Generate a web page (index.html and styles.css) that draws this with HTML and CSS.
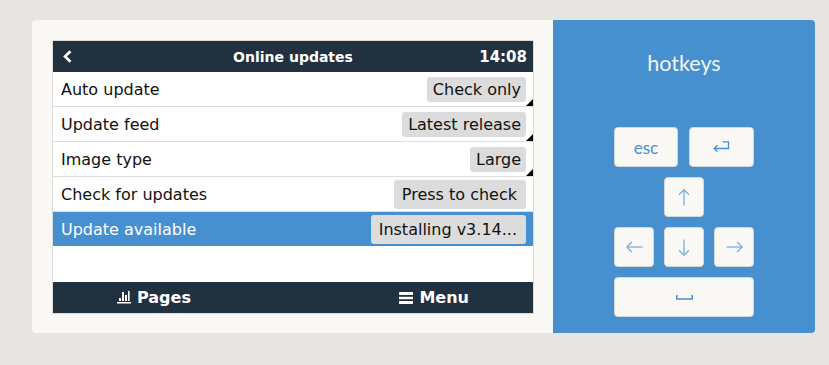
FILE: index.html
```html
<!DOCTYPE html>
<html lang="en">
<head>
  <meta charset="UTF-8">
  <title>Online updates</title>
  <link rel="stylesheet" href="styles.css">
</head>
<body>
  <div class="device">
    <div class="bezel">
      <div class="screen">
        <div class="titlebar">
          <span class="back">
            <svg width="10" height="13" viewBox="0 0 10 13"><polyline points="7.5,1.2 2,6.5 7.5,11.8" fill="none" stroke="#fff" stroke-width="2.6"/></svg>
          </span>
          <span class="title">Online updates</span>
          <span class="clock">14:08</span>
        </div>
        <ul class="items">
          <li class="item has-options"><span class="label">Auto update</span><span class="value">Check only</span></li>
          <li class="item has-options"><span class="label">Update feed</span><span class="value">Latest release</span></li>
          <li class="item has-options"><span class="label">Image type</span><span class="value">Large</span></li>
          <li class="item"><span class="label">Check for updates</span><span class="value button">Press to check</span></li>
          <li class="item selected"><span class="label">Update available</span><span class="value button">Installing v3.14...</span></li>
        </ul>
        <div class="toolbar">
          <span class="tool">
            <svg width="14" height="13" viewBox="0 0 14 13" fill="#fff">
              <rect x="2" y="7" width="2" height="3"/>
              <rect x="5" y="1" width="2" height="9"/>
              <rect x="8" y="4" width="2" height="6"/>
              <rect x="11" y="0" width="1.6" height="10"/>
              <rect x="0" y="11" width="14" height="1.5"/>
            </svg>
            Pages
          </span>
          <span class="tool">
            <svg width="14" height="12" viewBox="0 0 14 12" fill="#fff">
              <rect x="0" y="0" width="14" height="3"/>
              <rect x="0" y="4.8" width="14" height="2.4"/>
              <rect x="0" y="9" width="14" height="3"/>
            </svg>
            Menu
          </span>
        </div>
      </div>
    </div>

    <div class="hotkeys">
      <div class="hotkeys-title">hotkeys</div>
      <div class="keys">
        <div class="key-row">
          <div class="key wide">esc</div>
          <div class="key wide">
            <svg width="17" height="12" viewBox="0 0 17 12" fill="none" stroke="#478fce" stroke-width="1.3"><path d="M9.5 0.8 H15.5 V7.5 H1.2"/><path d="M4.5 4.3 L1.2 7.5 L4.5 10.7"/></svg>
          </div>
        </div>
        <div class="key-row">
          <div class="key">
            <svg width="12" height="17" viewBox="0 0 12 17" fill="none" stroke="#7aaede" stroke-width="1.3"><path d="M6 0.8 V16.5"/><path d="M1 5.8 L6 0.8 L11 5.8"/></svg>
          </div>
        </div>
        <div class="key-row">
          <div class="key">
            <svg width="17" height="12" viewBox="0 0 17 12" fill="none" stroke="#7aaede" stroke-width="1.3"><path d="M0.8 6 H16.5"/><path d="M5.8 1 L0.8 6 L5.8 11"/></svg>
          </div>
          <div class="key">
            <svg width="12" height="17" viewBox="0 0 12 17" fill="none" stroke="#7aaede" stroke-width="1.3"><path d="M6 0.5 V16.2"/><path d="M1 11.2 L6 16.2 L11 11.2"/></svg>
          </div>
          <div class="key">
            <svg width="17" height="12" viewBox="0 0 17 12" fill="none" stroke="#7aaede" stroke-width="1.3"><path d="M0.5 6 H16.2"/><path d="M11.2 1 L16.2 6 L11.2 11"/></svg>
          </div>
        </div>
        <div class="key-row">
          <div class="key space">
            <svg width="17" height="5" viewBox="0 0 17 5" fill="none" stroke="#478fce" stroke-width="1.5"><path d="M0.8 0 V4 H16.2 V0"/></svg>
          </div>
        </div>
      </div>
    </div>
  </div>
</body>
</html>
```

FILE: styles.css
```css
* { box-sizing: border-box; margin: 0; padding: 0; }
body {
  background: #e6e5e1;
  padding: 20px 0 0 32px;
  font-family: 'DejaVu Sans', sans-serif;
}
.device {
  display: flex;
  width: 783px;
}
.bezel {
  background: #f9f8f4;
  padding: 20px 19px 19px 20px;
  border-radius: 4px 0 0 4px;
}
.screen {
  width: 482px;
  height: 274px;
  border: 1px solid #dddcd8;
  background: #fff;
  display: flex;
  flex-direction: column;
}
.titlebar {
  height: 31px;
  background: #223140;
  color: #fff;
  display: grid;
  grid-template-columns: 1fr auto 1fr;
  align-items: center;
  padding: 0 6px;
}
.back { display: flex; align-items: center; padding-left: 4px; }
.title { font-size: 14px; font-weight: bold; }
.clock { font-size: 15px; font-weight: bold; justify-self: end; }
.items {
  list-style: none;
  flex: 1;
}
.item {
  position: relative;
  height: 35px;
  border-bottom: 1px solid #dddddd;
  display: flex;
  align-items: center;
  justify-content: space-between;
  padding: 0 7px 0 8px;
  font-size: 16px;
  color: #111;
}
.item .value {
  background: #dcdcdc;
  border-radius: 3px;
  height: 25px;
  line-height: 25px;
  padding: 0 5px 0 6px;
  color: #111;
}
.item .value.button {
  height: 29px;
  line-height: 29px;
  padding: 0 9px 0 8px;
}
.item.has-options::after {
  content: '';
  position: absolute;
  right: 0;
  bottom: 0;
  border-left: 7px solid transparent;
  border-bottom: 7px solid #000;
}
.item.selected {
  background: #4790d0;
  color: #fff;
  border-bottom-color: #fff;
}
.toolbar {
  height: 31px;
  background: #223140;
  color: #fff;
  display: flex;
  align-items: center;
  justify-content: space-between;
  padding: 0 64px;
  font-size: 16px;
  font-weight: bold;
}
.tool {
  display: flex;
  align-items: center;
  gap: 6px;
}
.hotkeys {
  width: 262px;
  height: 313px;
  background: #4790d0;
  border-radius: 0 4px 4px 0;
  display: flex;
  flex-direction: column;
  align-items: center;
  padding-top: 31px;
  font-family: 'Lato', sans-serif;
}
.hotkeys-title {
  color: #f4f3ef;
  font-size: 21.5px;
  line-height: 24px;
  margin-bottom: 52px;
}
.keys {
  width: 140px;
  display: flex;
  flex-direction: column;
  gap: 10px;
}
.key-row {
  display: flex;
  justify-content: center;
  gap: 10px;
}
.key-row:first-child { gap: 11px; }
.key {
  width: 40px;
  height: 40px;
  background: #f9f8f4;
  border: 1px solid #d8d8d6;
  border-radius: 4px;
  display: flex;
  align-items: center;
  justify-content: center;
  color: #4a8fcf;
  font-size: 17px;
}
.key.wide { width: 64px; }
.key.wide + .key.wide { width: 65px; }
.key.space { width: 140px; }
```
